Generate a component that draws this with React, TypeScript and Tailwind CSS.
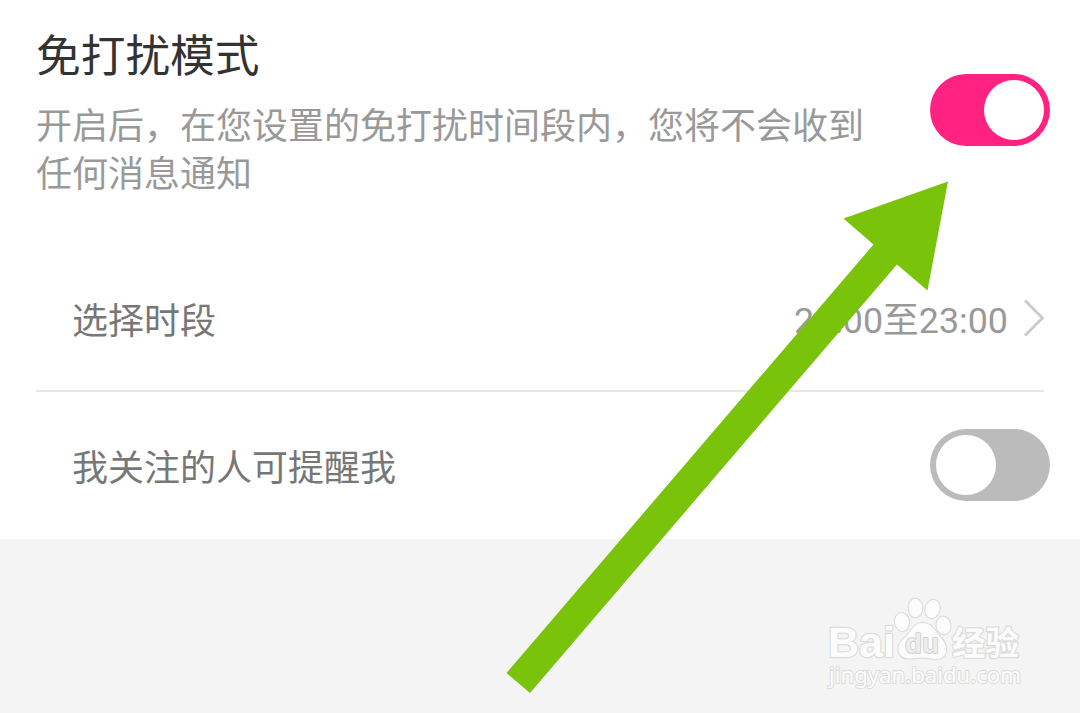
import React from 'react'
import clsx from 'clsx'

interface SwitchProps {
  checked: boolean
  label: string
}

function Switch({ checked, label }: SwitchProps) {
  return (
    <button
      role="switch"
      aria-checked={checked}
      aria-label={label}
      className={clsx(
        'flex h-[72px] w-[120px] shrink-0 items-center rounded-full p-1.5',
        checked ? 'justify-end bg-[#ff2281]' : 'justify-start bg-[#bbbbbb]'
      )}
    >
      <span className="size-[60px] rounded-full bg-white" />
    </button>
  )
}

function Watermark() {
  return (
    <svg viewBox="0 0 210 100" className="h-[100px] w-[210px]" fill="#fcfcfc" stroke="#dcdcdc" strokeWidth="2.4" strokeLinejoin="round" paintOrder="stroke">
      <text x="5" y="67" textLength="67" lengthAdjust="spacingAndGlyphs" fontSize="43" fontWeight="700" className="font-['Liberation_Sans',sans-serif]">Bai</text>
      {/* Paw */}
      <g strokeWidth="2.2">
        <ellipse cx="79" cy="32" rx="7" ry="9" transform="rotate(-8 79 32)" />
        <ellipse cx="92.5" cy="18" rx="6.8" ry="9.3" />
        <ellipse cx="109.5" cy="19" rx="7" ry="9.2" transform="rotate(14 109.5 19)" />
        <ellipse cx="120.5" cy="35.5" rx="7" ry="8.8" transform="rotate(-8 120.5 35.5)" />
        <path d="M99.500 33c-6 0-9.500 4-12.500 9-3 4.500-11 9-11.500 15.500-.5 7 4 11 11 11 5 0 8-1 13-1s9.500 1.500 14.500 1.500c6 0 10-5 9-12-1-6-6-9.500-9-14-4-5.500-7-10-14.500-10z" />
      </g>
      <text x="82" y="62.500" textLength="34" lengthAdjust="spacingAndGlyphs" fontSize="27" fontWeight="700" fill="#ededed" stroke="#cccccc" strokeWidth="1.6" className="font-['Liberation_Sans',sans-serif]">du</text>
      <text x="129" y="65" textLength="67" lengthAdjust="spacingAndGlyphs" fontSize="33" fontWeight="700" className="font-['Noto_Sans_CJK_SC',sans-serif]">经验</text>
      <text x="6" y="92.500" textLength="192" lengthAdjust="spacingAndGlyphs" fontSize="22" strokeWidth="2" className="font-['Noto_Sans',sans-serif]">jingyan.baidu.com</text>
    </svg>
  )
}

export default function App() {
  return (
    <div className="relative h-[713px] w-[1080px] overflow-hidden bg-[#f4f4f4] font-[Roboto,'Noto_Sans_CJK_SC',sans-serif] text-4xl">
      <main className="h-[539px] bg-white">
        <section className="flex h-[250px] items-start justify-between pl-9 pr-[30px] pt-[27px]">
          <div>
            <h1 className="text-[44.7px] leading-[60px] text-[#333333]">免打扰模式</h1>
            <p className="mt-4 w-[830px] text-4xl leading-[48px] text-[#999999]">
              开启后，在您设置的免打扰时间段内，您将不会收到任何消息通知
            </p>
          </div>
          <div className="pt-[47px]">
            <Switch checked label="免打扰模式" />
          </div>
        </section>

        <section className="mx-9 flex h-[142px] items-center justify-between border-b-2 border-[#e6e6e6] pl-9">
          <span className="pt-1 text-[#777777]">选择时段</span>
          <span className="flex items-center text-[#999999]">
            <span className="pt-[3px] text-[35.8px]">22:00至23:00</span>
            <svg viewBox="0 0 20 38" className="ml-4 h-[38px] w-5 -translate-y-0.5" fill="none" stroke="#cccccc" strokeWidth="3">
              <path d="M1 1.500 18.500 19 1 36.500" />
            </svg>
          </span>
        </section>

        <section className="flex h-[145px] items-center justify-between pl-[72px] pr-[30px]">
          <span className="pt-2 text-[#777777]">我关注的人可提醒我</span>
          <Switch checked={false} label="我关注的人可提醒我" />
        </section>
      </main>

      <div className="absolute left-[823px] top-[590px]">
        <Watermark />
      </div>

      {/* Pointer to the main switch */}
      <svg viewBox="0 0 1080 713" className="pointer-events-none absolute inset-0 h-full w-full">
        <polygon points="948,181.500 843.500,218.500 873.500,244.500 506.500,673 530,693 897,264.500 927.500,290.500" fill="#79c30b" />
      </svg>
    </div>
  )
}
